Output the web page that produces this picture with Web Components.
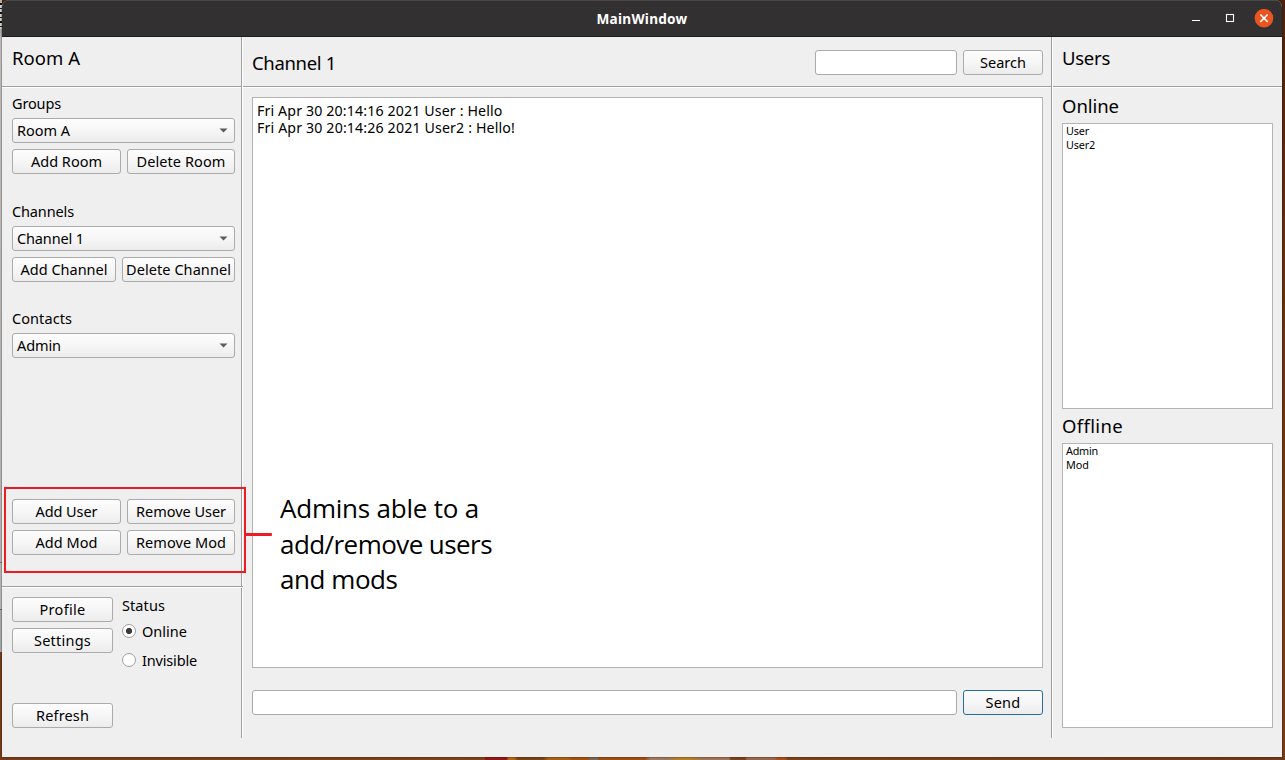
<!DOCTYPE html>
<html lang="en">
<head>
<meta charset="utf-8">
<title>MainWindow</title>
<style>
html,body{margin:0;height:100%;overflow:hidden}
body{font:14.5px/17px "Noto Sans","Open Sans",sans-serif;color:#000}
</style>
</head>
<body>
<desktop-backdrop>
  <main-window>
    <title-bar slot="title"><fit-text w="91">MainWindow</fit-text></title-bar>
    <rooms-panel slot="left"></rooms-panel>
    <chat-panel slot="center"></chat-panel>
    <users-panel slot="right"></users-panel>
  </main-window>
  <call-out slot="over">
    <fit-text w="199">Admins able to a</fit-text>
    <fit-text w="212">add/remove users</fit-text>
    <fit-text w="117.5">and mods</fit-text>
  </call-out>
</desktop-backdrop>
<script>
const define = (name, html, init) => customElements.define(name, class extends HTMLElement {
  constructor() {
    super();
    this.attachShadow({mode: 'open'}).innerHTML = html;
  }
  connectedCallback() { if (init) init(this, this.shadowRoot); }
});

define('desktop-backdrop', `<style>
:host{display:block;position:relative;box-sizing:border-box;width:1285px;height:760px;padding:0 3px 3px 2px;overflow:hidden;
 background:
 linear-gradient(90deg,transparent 485px,#951717 485px 507px,#b06a17 508px 514px,#7c4316 518px 543px,#a8631a 548px 568px,#a25412 572px 588px,#7d685c 590px 597px,#a05012 599px 645px,#a17a60 650px 666px,#b98226 680px 690px,#a3755a 703px 729px,#7c431f 731px 745px,#98694e 747px 775px,#a9511c 777px 786px,transparent 787px) 0 757px/100% 3px no-repeat,
 repeating-linear-gradient(180deg,#111 0 2px,#d4dbd5 2px 5px,#222 5px 6px,#cfd8d2 6px 9px) 0 3px/2px 26px no-repeat,
 linear-gradient(#aab5b2 0 30px,#c2c2c2 40px,#b9b9b9 562px,#777 562px 563px,#bbb 563px 609px,#666 609px 610px,#a9adb2 610px) 0 0/2px 652px no-repeat,
 linear-gradient(90deg,#783d18 0%,#844619 50%,#713a18 100%) 0 757px/100% 3px no-repeat,
 linear-gradient(#4a220b,#60300f 35%,#71391a 70%,#773d1a)}
</style><slot></slot><slot name="over"></slot>`);

define('main-window', `<style>
:host{display:grid;grid-template-rows:37px 1fr;height:757px;background:#efefef;border-radius:7px 7px 0 0;overflow:hidden;box-shadow:0 0 2px #2a1407}
.body{display:grid;grid-template-columns:239px 2px 808px 2px 229px;padding-bottom:19px}
.v{background:linear-gradient(90deg,#9f9f9f 50%,#fff 50%)}
</style><slot name="title"></slot>
<div class="body"><slot name="left"></slot><div class="v"></div><slot name="center"></slot><div class="v"></div><slot name="right"></slot></div>`);

define('title-bar', `<style>
:host{display:grid;grid-template-columns:1fr auto 1fr;align-items:center;box-sizing:border-box;background:#323030;border-top:1px solid #4a4848;border-bottom:1px solid #1e1d1d;color:#fff;font-weight:700;font-size:13.6px}
svg{justify-self:end;margin-right:8px;display:block}
</style><span></span><slot></slot>
<svg width="84" height="20" viewBox="0 0 84 20" fill="none"><path d="M2 11.5h8" stroke="#fff"/><rect x="36.5" y="5.5" width="7" height="7" stroke="#fff" stroke-width="1.1"/><circle cx="74" cy="9.2" r="9.3" fill="#e95420"/><path d="M70.3 5.5l7.4 7.4m0-7.4l-7.4 7.4" stroke="#fff" stroke-width="1.5"/></svg>`);

define('h-rule', `<style>:host{display:block;height:2px;background:linear-gradient(#9f9f9f 50%,#fff 50%)}</style>`);

const face = 'box-sizing:border-box;height:25px;border:1px solid #ababab;border-radius:3px;background:linear-gradient(#fdfdfd,#f6f6f6 50%,#ececec)';
define('push-button', `<style>
:host{display:flex;align-items:center;justify-content:center;${face}}
:host([primary]){border-color:#216f9f}
</style><slot></slot>`);
define('combo-box', `<style>
:host{display:flex;align-items:center;justify-content:space-between;padding:0 6px 0 4px;${face}}
</style><slot></slot><svg width="9" height="5" viewBox="0 0 9 5"><path d="M.5 .5h8L4.5 4.5z" fill="#5c5c5c"/></svg>`);
define('line-edit', `<style>:host{display:block;${face};background:#fff}</style>`);
define('radio-item', `<style>
:host{display:flex;align-items:center;gap:6px;height:17px}
i{box-sizing:border-box;width:14px;height:14px;margin-bottom:1px;border:1px solid #a0a0a0;border-radius:50%;background:#fff}
:host([checked]) i{background:radial-gradient(circle,#3a3a3a 2.7px,#fff 3.5px)}
</style><i></i><slot></slot>`);
define('text-list', `<style>
:host{display:flex;flex-direction:column;align-items:flex-start;box-sizing:border-box;border:1px solid #b4b4b4;background:#fff}
</style><slot></slot>`);

define('rooms-panel', `<style>
:host{display:flex;flex-direction:column;min-width:0}
.head{height:49px;box-sizing:border-box;padding:12px 10px 0;font-size:18.5px}
.manage{height:498px;box-sizing:border-box;padding:7px 6px 0 10px;display:flex;flex-direction:column}
section{display:grid;gap:6px;margin-bottom:29px}
section.channels{margin-bottom:28px}
.row{display:grid;grid-template-columns:109px 108px;gap:6px}
.ch{grid-template-columns:104px 113px}
.admin{margin-top:112px;display:grid;gap:6px}
h-rule.full{margin-right:-2px;position:relative}
.foot{display:grid;grid-template-columns:101px 1fr;gap:9px;padding:9px 6px 0 10px}
.btns{display:flex;flex-direction:column;gap:6px}
.btns push-button:last-child{margin-top:44px}
.status{display:flex;flex-direction:column}
.status radio-item{margin-top:9px}.status radio-item+radio-item{margin-top:12px}
</style>
<div class="head"><fit-text w="68">Room A</fit-text></div><h-rule></h-rule>
<div class="manage">
<section><fit-text w="49">Groups</fit-text><combo-box><fit-text w="53">Room A</fit-text></combo-box>
<div class="row"><push-button><fit-text w="71">Add Room</fit-text></push-button><push-button><fit-text w="89">Delete Room</fit-text></push-button></div></section>
<section class="channels"><fit-text w="62">Channels</fit-text><combo-box><fit-text w="67">Channel 1</fit-text></combo-box>
<div class="row ch"><push-button><fit-text w="87">Add Channel</fit-text></push-button><push-button><fit-text w="105">Delete Channel</fit-text></push-button></div></section>
<section><fit-text w="60">Contacts</fit-text><combo-box><fit-text w="44">Admin</fit-text></combo-box></section>
<div class="admin">
<div class="row"><push-button><fit-text w="62">Add User</fit-text></push-button><push-button><fit-text w="90">Remove User</fit-text></push-button></div>
<div class="row"><push-button><fit-text w="62">Add Mod</fit-text></push-button><push-button><fit-text w="90">Remove Mod</fit-text></push-button></div></div>
</div>
<h-rule class="full"></h-rule>
<div class="foot"><div class="btns"><push-button><fit-text w="46">Profile</fit-text></push-button><push-button><fit-text w="57">Settings</fit-text></push-button><push-button><fit-text w="53">Refresh</fit-text></push-button></div>
<div class="status"><fit-text w="43">Status</fit-text><radio-item checked><fit-text w="45">Online</fit-text></radio-item><radio-item><fit-text w="55">Invisible</fit-text></radio-item></div></div>`);

define('chat-panel', `<style>
:host{display:flex;flex-direction:column;min-width:0}
.head{height:49px;box-sizing:border-box;padding:13px 8px 0 9px;display:grid;grid-template-columns:1fr 142px 80px;gap:6px}
.title{font-size:18.5px;padding-top:4px}
text-list{margin:9px 8px 0 9px;height:571px;padding:4px;font-size:14.2px}
.send{display:grid;grid-template-columns:1fr 80px;gap:6px;margin:22px 8px 0 9px}
</style>
<div class="head"><div class="title"><fit-text w="84">Channel 1</fit-text></div><line-edit></line-edit><push-button><fit-text w="46">Search</fit-text></push-button></div>
<h-rule></h-rule>
<text-list><fit-text w="245.5">Fri Apr 30 20:14:16 2021 User : Hello</fit-text><fit-text w="258">Fri Apr 30 20:14:26 2021 User2 : Hello!</fit-text></text-list>
<div class="send"><line-edit></line-edit><push-button primary><fit-text w="35">Send</fit-text></push-button></div>`);

define('users-panel', `<style>
:host{display:flex;flex-direction:column;min-width:0}
.head{height:49px;box-sizing:border-box;padding:12px 9px 0}
.head,h3{font-size:18.5px;font-weight:400}
h3{margin:0;padding:9px 9px 0;height:35px;box-sizing:border-box}
text-list{margin:0 9px;height:286px;padding:0 3px;font-size:10.8px;line-height:14px}
h3.off{height:34px;padding-top:8px}
text-list.off{height:285px}
</style>
<div class="head"><fit-text w="48">Users</fit-text></div><h-rule></h-rule>
<h3><fit-text w="57">Online</fit-text></h3>
<text-list><fit-text w="23">User</fit-text><fit-text w="29">User2</fit-text></text-list>
<h3 class="off"><fit-text w="61">Offline</fit-text></h3>
<text-list class="off"><fit-text w="32">Admin</fit-text><fit-text w="23">Mod</fit-text></text-list>`);

define('call-out', `<style>
:host{position:absolute;left:4px;top:487px;display:flex;align-items:flex-start;color:#000}
.frame{box-sizing:border-box;width:242px;height:86px;border:2px solid #ed1c24}
.line{width:26px;height:3px;margin-top:46px;background:#ed1c24;border-radius:0 1px 1px 0}
.text{display:flex;flex-direction:column;align-items:flex-start;margin:4px 0 0 8px;font:26px/35.5px "Open Sans","Noto Sans",sans-serif}
</style><div class="frame"></div><div class="line"></div><div class="text"><slot></slot></div>`);

// Spreads its text over the width given in the "w" attribute.
define('fit-text', `<style>:host{display:block;width:max-content;white-space:nowrap}</style><slot></slot>`, el => {
  const natural = el.getBoundingClientRect().width;
  el.style.letterSpacing = (el.getAttribute('w') - natural) / el.textContent.length + 'px';
});
</script>
</body>
</html>
